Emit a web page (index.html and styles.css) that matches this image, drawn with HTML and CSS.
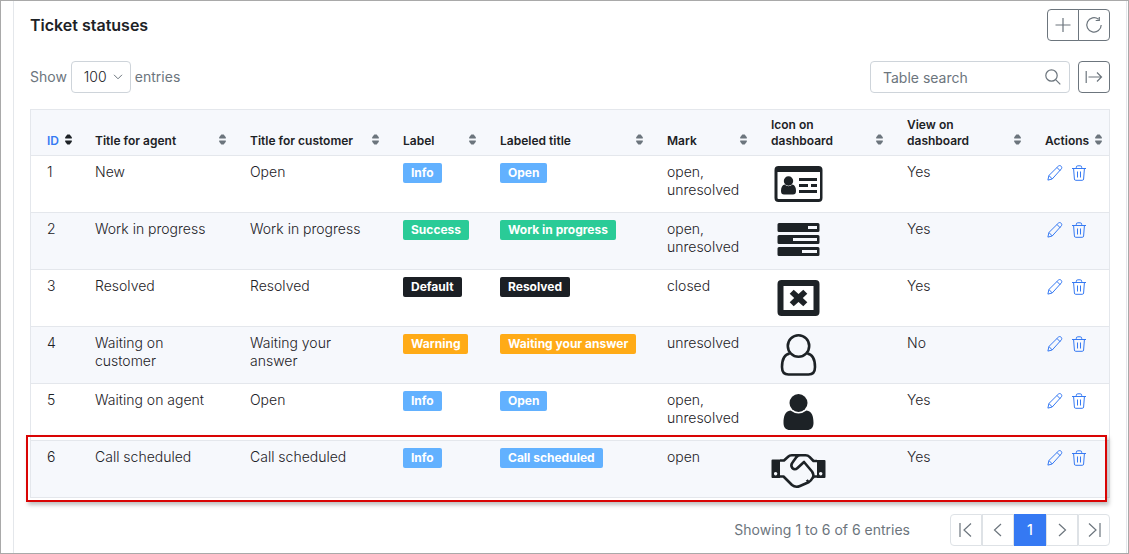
FILE: index.html
```html
<!DOCTYPE html>
<html lang="en">
<head>
<meta charset="utf-8">
<meta name="viewport" content="width=device-width, initial-scale=1">
<title>Ticket statuses</title>
<link rel="stylesheet" href="styles.css">
</head>
<body>
<svg class="sprite" aria-hidden="true">
  <symbol id="sort" viewBox="0 0 7 11"><path class="up" d="M2.300 .4h2.400L6.800 3.300v1.200H.2V3.300z"/><path class="down" d="M.2 6.500h6.600v1.200L4.700 10.600H2.300L.2 7.700z"/></symbol>
  <symbol id="pencil" viewBox="0 0 16 16"><path d="M.9 15.1l1-4.6L11.4 1.1c.9-.8 1.9-.7 2.700.1.8.8 1 1.900.1 2.800L5.200 14zM10 2.500l3.300 3.400M2 10.600L5.300 14"/></symbol>
  <symbol id="trash" viewBox="0 0 16 16"><path d="M1 3.500h14M5.300 3.300V2.300Q5.300.8 6.800.8h2.400q1.500 0 1.500 1.500v1M2.600 3.700l.8 10.300q.1 1.300 1.300 1.300h6.600q1.200 0 1.300-1.300l.8-10.300M6.500 6.500v6M9.500 6.500v6"/></symbol>
</svg>
<div class="frame">
<main class="card">
  <header class="bar">
    <h1 class="title">Ticket statuses</h1>
    <div class="group">
      <button class="tool" type="button" aria-label="Add"><svg viewBox="0 0 18 18"><path d="M9 2v14M1.500 9h15"/></svg></button>
      <button class="tool" type="button" aria-label="Refresh"><svg viewBox="0 0 18 18"><path d="M13.500 3.300A7.200 7.200 0 1 0 16.200 9M14.300.900v3.600h-3.600"/></svg></button>
    </div>
  </header>
  <div class="bar controls">
    <div class="length">
      <label for="length">Show</label>
      <span class="select-box">
        <select id="length"><option>100</option><option>50</option></select>
        <svg viewBox="0 0 10 6"><path d="M1 .8l4 4 4-4"/></svg>
      </span>
      <span>entries</span>
    </div>
    <div class="tools">
      <div class="search">
        <input type="text" placeholder="Table search" aria-label="Table search">
        <svg viewBox="0 0 16 16"><circle cx="6.500" cy="6.500" r="5.700"/><path d="M10.600 10.600l4.700 4.700"/></svg>
      </div>
      <button class="tool" type="button" aria-label="Export"><svg viewBox="0 0 18 18"><path d="M1.200 3v12M3.500 9h13M12 4.500L16.500 9 12 13.500"/></svg></button>
    </div>
  </div>

  <div class="table-box">
  <table>
    <colgroup><col class="c-id"><col class="c-agent"><col class="c-customer"><col class="c-label"><col class="c-labeled"><col class="c-mark"><col class="c-icon"><col class="c-view"><col class="c-actions"></colgroup>
    <thead>
      <tr>
        <th><button class="sort active" type="button"><span>ID</span><svg><use href="#sort"/></svg></button></th>
        <th><button class="sort" type="button"><span>Title for agent</span><svg><use href="#sort"/></svg></button></th>
        <th><button class="sort" type="button"><span>Title for customer</span><svg><use href="#sort"/></svg></button></th>
        <th><button class="sort" type="button"><span>Label</span><svg><use href="#sort"/></svg></button></th>
        <th><button class="sort" type="button"><span>Labeled title</span><svg><use href="#sort"/></svg></button></th>
        <th><button class="sort" type="button"><span>Mark</span><svg><use href="#sort"/></svg></button></th>
        <th><button class="sort" type="button"><span>Icon on dashboard</span><svg><use href="#sort"/></svg></button></th>
        <th><button class="sort" type="button"><span>View on dashboard</span><svg><use href="#sort"/></svg></button></th>
        <th><button class="sort" type="button"><span>Actions</span><svg><use href="#sort"/></svg></button></th>
      </tr>
    </thead>
    <tbody>
      <tr>
        <td>1</td><td>New</td><td>Open</td>
        <td><span class="badge info">Info</span></td><td><span class="badge info">Open</span></td>
        <td>open, unresolved</td>
        <td><svg class="pic" viewBox="0 0 56 42"><path fill-rule="evenodd" d="M7.500 3h40q4 0 4 4v28q0 4-4 4h-40q-4 0-4-4V7q0-4 4-4zM6.500 9v26q0 1 1 1h40.500q1 0 1-1V9z"/><circle cx="17.500" cy="18" r="4.700"/><path d="M13.500 21.500q4 3.500 8 0 3.500 1 3.500 6.500 0 3.500-3 3.500h-9q-3 0-3-3.500 0-5.500 3.500-6.500zM28 15h18v3H28zM28 21h9v3h-9zM40 21h6v3h-6zM28 27h18v3H28z"/></svg></td>
        <td>Yes</td>
        <td><div class="actions"><button type="button" aria-label="Edit"><svg><use href="#pencil"/></svg></button><button type="button" aria-label="Delete"><svg><use href="#trash"/></svg></button></div></td>
      </tr>
      <tr>
        <td>2</td><td>Work in progress</td><td>Work in progress</td>
        <td><span class="badge success">Success</span></td><td><span class="badge success">Work in progress</span></td>
        <td>open, unresolved</td>
        <td><svg class="pic" viewBox="0 0 56 42"><path fill-rule="evenodd" d="M8 3h39q1.500 0 1.500 1.500v6q0 1.500-1.500 1.500H8q-1.500 0-1.500-1.500v-6Q6.500 3 8 3zM37 6v3h9V6zM8 15h39q1.500 0 1.500 1.500v6q0 1.500-1.500 1.500H8q-1.500 0-1.500-1.500v-6Q6.500 15 8 15zM22 18v3h24v-3zM8 27h39q1.500 0 1.500 1.500v6q0 1.500-1.500 1.500H8q-1.500 0-1.500-1.500v-6Q6.500 27 8 27zM31 30v3h15v-3z"/></svg></td>
        <td>Yes</td>
        <td><div class="actions"><button type="button" aria-label="Edit"><svg><use href="#pencil"/></svg></button><button type="button" aria-label="Delete"><svg><use href="#trash"/></svg></button></div></td>
      </tr>
      <tr>
        <td>3</td><td>Resolved</td><td>Resolved</td>
        <td><span class="badge default">Default</span></td><td><span class="badge default">Resolved</span></td>
        <td>closed</td>
        <td><svg class="pic" viewBox="0 0 56 42"><path fill-rule="evenodd" d="M10.500 3h34q4 0 4 4v28q0 4-4 4h-34q-4 0-4-4V7q0-4 4-4zM12.500 9v24h30V9z"/><path d="M22.700 12.700l4.800 4.300 4.800-4.300 4 4-4.500 4.300 4.500 4.300-4 4-4.800-4.300-4.800 4.300-4-4 4.500-4.300-4.500-4.300z"/></svg></td>
        <td>Yes</td>
        <td><div class="actions"><button type="button" aria-label="Edit"><svg><use href="#pencil"/></svg></button><button type="button" aria-label="Delete"><svg><use href="#trash"/></svg></button></div></td>
      </tr>
      <tr>
        <td>4</td><td>Waiting on customer</td><td>Waiting your answer</td>
        <td><span class="badge warning">Warning</span></td><td><span class="badge warning">Waiting your answer</span></td>
        <td>unresolved</td>
        <td><svg class="pic line" viewBox="0 0 56 42"><circle cx="27.500" cy="12" r="10.700"/><path d="M18.700 19.500C13 20.500 11 25.500 11 33q0 7.500 6.500 7.500h20q6.500 0 6.500-7.500c0-7.500-2-12.500-7.700-13.500"/></svg></td>
        <td>No</td>
        <td><div class="actions"><button type="button" aria-label="Edit"><svg><use href="#pencil"/></svg></button><button type="button" aria-label="Delete"><svg><use href="#trash"/></svg></button></div></td>
      </tr>
      <tr>
        <td>5</td><td>Waiting on agent</td><td>Open</td>
        <td><span class="badge info">Info</span></td><td><span class="badge info">Open</span></td>
        <td>open, unresolved</td>
        <td><svg class="pic" viewBox="0 0 56 42"><circle cx="27.500" cy="12" r="9"/><path d="M19.500 19.500q8 6 16 0c5.500.500 7 6 7 12.500 0 4.500-2.500 7-6.500 7H19c-4 0-6.500-2.500-6.500-7 0-6.500 1.500-12 7-12.500z"/></svg></td>
        <td>Yes</td>
        <td><div class="actions"><button type="button" aria-label="Edit"><svg><use href="#pencil"/></svg></button><button type="button" aria-label="Delete"><svg><use href="#trash"/></svg></button></div></td>
      </tr>
      <tr>
        <td>6</td><td>Call scheduled</td><td>Call scheduled</td>
        <td><span class="badge info">Info</span></td><td><span class="badge info">Call scheduled</span></td>
        <td>open</td>
        <td><svg class="pic" viewBox="0 0 56 42"><path fill-rule="evenodd" d="M1.500 11.500H9V30H1.500Q.500 30 .500 29V12.500q0-1 1-1zM4.600 24a1.700 1.700 0 1 0 .01 0zM46 12h7.500q1 0 1 1v16q0 1-1 1H46zM49.700 24a1.700 1.700 0 1 0 .01 0z"/><path class="outline" d="M9 12.500h4l3.800-3.500q1.700-1.700 4-1.700h7.700M9 28.500h3.500l8.500 8.500q3.500 3 8 1l8.500-3.700q2.500-1.300 4-4.300l1.500-1.500h3M46 13h-3.500l-4-4.200q-1.500-1.500-4-1.500h-5q-2.500 0-4 1.800L21.500 14.500q-2.200 2.800-.2 5.500 2.500 2.500 5.200 0l6.500-6 8 9.500q2 3 1 5.500M37.500 34l-1.800-2"/></svg></td>
        <td>Yes</td>
        <td><div class="actions"><button type="button" aria-label="Edit"><svg><use href="#pencil"/></svg></button><button type="button" aria-label="Delete"><svg><use href="#trash"/></svg></button></div></td>
      </tr>
    </tbody>
  </table>
  <div class="highlight"></div>
  </div>

  <footer class="foot">
    <span>Showing 1 to 6 of 6 entries</span>
    <nav class="pager" aria-label="Pages">
      <button type="button" aria-label="First"><svg viewBox="0 0 16 16"><path d="M2 1v14M13 1.500L6 8l7 6.500"/></svg></button>
      <button type="button" aria-label="Previous"><svg viewBox="0 0 16 16"><path d="M11 2L4.500 8l6.500 6"/></svg></button>
      <button class="current" type="button" aria-current="page">1</button>
      <button type="button" aria-label="Next"><svg viewBox="0 0 16 16"><path d="M5 2l6.500 6L5 14"/></svg></button>
      <button type="button" aria-label="Last"><svg viewBox="0 0 16 16"><path d="M14 1v14M3 1.500L10 8l-7 6.500"/></svg></button>
    </nav>
  </footer>
</main>
</div>
</body>
</html>
```
FILE: styles.css
```css
* { box-sizing: border-box; }
body {
  margin: 0;
  background: #fff;
  color: #1d2226;
  font: 300 14px/18px Inter, "Liberation Sans", sans-serif;
}
button, input, select { font: inherit; color: inherit; }
button { padding: 0; border: 0; background: none; cursor: pointer; }
svg { display: block; fill: none; stroke: currentColor; }
.sprite { position: absolute; width: 0; height: 0; }

.frame {
  display: flex;
  min-height: 100vh;
  border: 1px solid #a9a9a9;
  padding: 0 1px 0 12px;
}
.card {
  flex: 1;
  border: solid #e4e7eb;
  border-width: 0 1px;
  padding: 8px 16px 7px;
}
.bar { display: flex; justify-content: space-between; align-items: center; }
.title { margin: 0; font-size: 16px; line-height: 24px; font-weight: 600; }
.controls { margin: 20px 0 16px; color: #6c757d; }
.group, .tools, .length { display: flex; align-items: center; }
.tools { gap: 8px; }
.length { gap: 4px; font-weight: 400; }

.tool {
  display: grid;
  place-items: center;
  width: 32px;
  height: 32px;
  border: 1px solid #6c757d;
  border-radius: 4px;
  color: #6c757d;
}
.tool svg { width: 18px; height: 18px; stroke-width: 1.2; }
.group .tool:first-child { border-radius: 4px 0 0 4px; }
.group .tool:last-child { border-radius: 0 4px 4px 0; margin-left: -1px; }

.select-box, .search { position: relative; }
.select-box select {
  appearance: none;
  display: block;
  width: 60px;
  height: 32px;
  padding: 0 12px;
  border: 1px solid #ced4da;
  border-radius: 4px;
  background: #fff;
  color: #1d2226;
  font-weight: 300;
}
.select-box svg { position: absolute; right: 8px; top: 13px; width: 10px; height: 6px; pointer-events: none; }
.search input {
  display: block;
  width: 200px;
  height: 32px;
  padding: 0 36px 0 12px;
  border: 1px solid #ced4da;
  border-radius: 4px;
  background: #fff;
  font-weight: 400;
}
.search input::placeholder { color: #6c757d; opacity: 1; }
.search svg { position: absolute; right: 9px; top: 8px; width: 16px; height: 16px; stroke-width: 1.2; }

.table-box { position: relative; }
table {
  width: 100%;
  table-layout: fixed;
  border-collapse: separate;
  border-spacing: 0;
  border: solid #e4e7ec;
  border-width: 1px 1px 0;
}
.c-id { width: 56px; }
.c-agent { width: 155px; }
.c-customer { width: 153px; }
.c-label { width: 97px; }
.c-labeled { width: 167px; }
.c-mark { width: 104px; }
.c-icon { width: 136px; }
.c-view { width: 138px; }
.c-actions { width: 72px; }
th, td {
  padding: 7px 16px 7px 8px;
  border-bottom: 1px solid #e4e7ec;
  text-align: left;
  vertical-align: top;
}
th { padding-bottom: 6px; vertical-align: bottom; }
th:first-child, td:first-child { padding-left: 16px; }
th:last-child, td:last-child { padding-right: 8px; }
thead, tbody tr:nth-child(even) { background: #f6f8fc; }

.sort {
  display: flex;
  justify-content: space-between;
  align-items: flex-end;
  gap: 6px;
  width: 100%;
  text-align: left;
  font-size: 12px;
  line-height: 16px;
  font-weight: 600;
}
.sort svg { flex: none; width: 7px; height: 11px; margin-bottom: 4px; fill: #6c757d; stroke: none; }
.sort.active span { color: #3579f3; }
.sort.active svg { fill: #1d2226; }

.badge {
  display: block;
  width: fit-content;
  padding: 0 8px;
  border-radius: 2px;
  color: #fff;
  font-size: 12px;
  line-height: 20px;
  font-weight: 700;
  white-space: nowrap;
}
.info { background: #62b1ff; }
.success { background: #2acb97; }
.default { background: #1b1f24; }
.warning { background: #ffab17; }

.pic { width: 56px; height: 42px; fill: #1d2226; stroke: none; }
.pic.line, .pic .outline { fill: none; stroke: #1d2226; stroke-width: 2.6; stroke-linejoin: round; }
.actions { display: flex; gap: 8px; padding: 2px 0 0 2px; color: #3579f3; }
.actions svg { width: 16px; height: 16px; }

.highlight {
  position: absolute;
  left: -4px;
  right: 3px;
  bottom: -4px;
  height: 67px;
  border: 2px solid #d90404;
  box-shadow: 2px 3px 4px rgba(0, 0, 0, .25);
  pointer-events: none;
}

.foot {
  display: flex;
  justify-content: flex-end;
  align-items: center;
  gap: 40px;
  margin-top: 16px;
  color: #6c757d;
  font-weight: 400;
}
.pager { display: flex; }
.pager button {
  display: grid;
  place-items: center;
  width: 32px;
  height: 32px;
  border: 1px solid #dee2e6;
}
.pager button:first-child { border-radius: 4px 0 0 4px; }
.pager button:last-child { border-radius: 0 4px 4px 0; }
.pager svg { width: 16px; height: 16px; stroke-width: 1.2; }
.pager .current { border-color: #3579f3; background: #3579f3; color: #fff; font-weight: 500; }
```
